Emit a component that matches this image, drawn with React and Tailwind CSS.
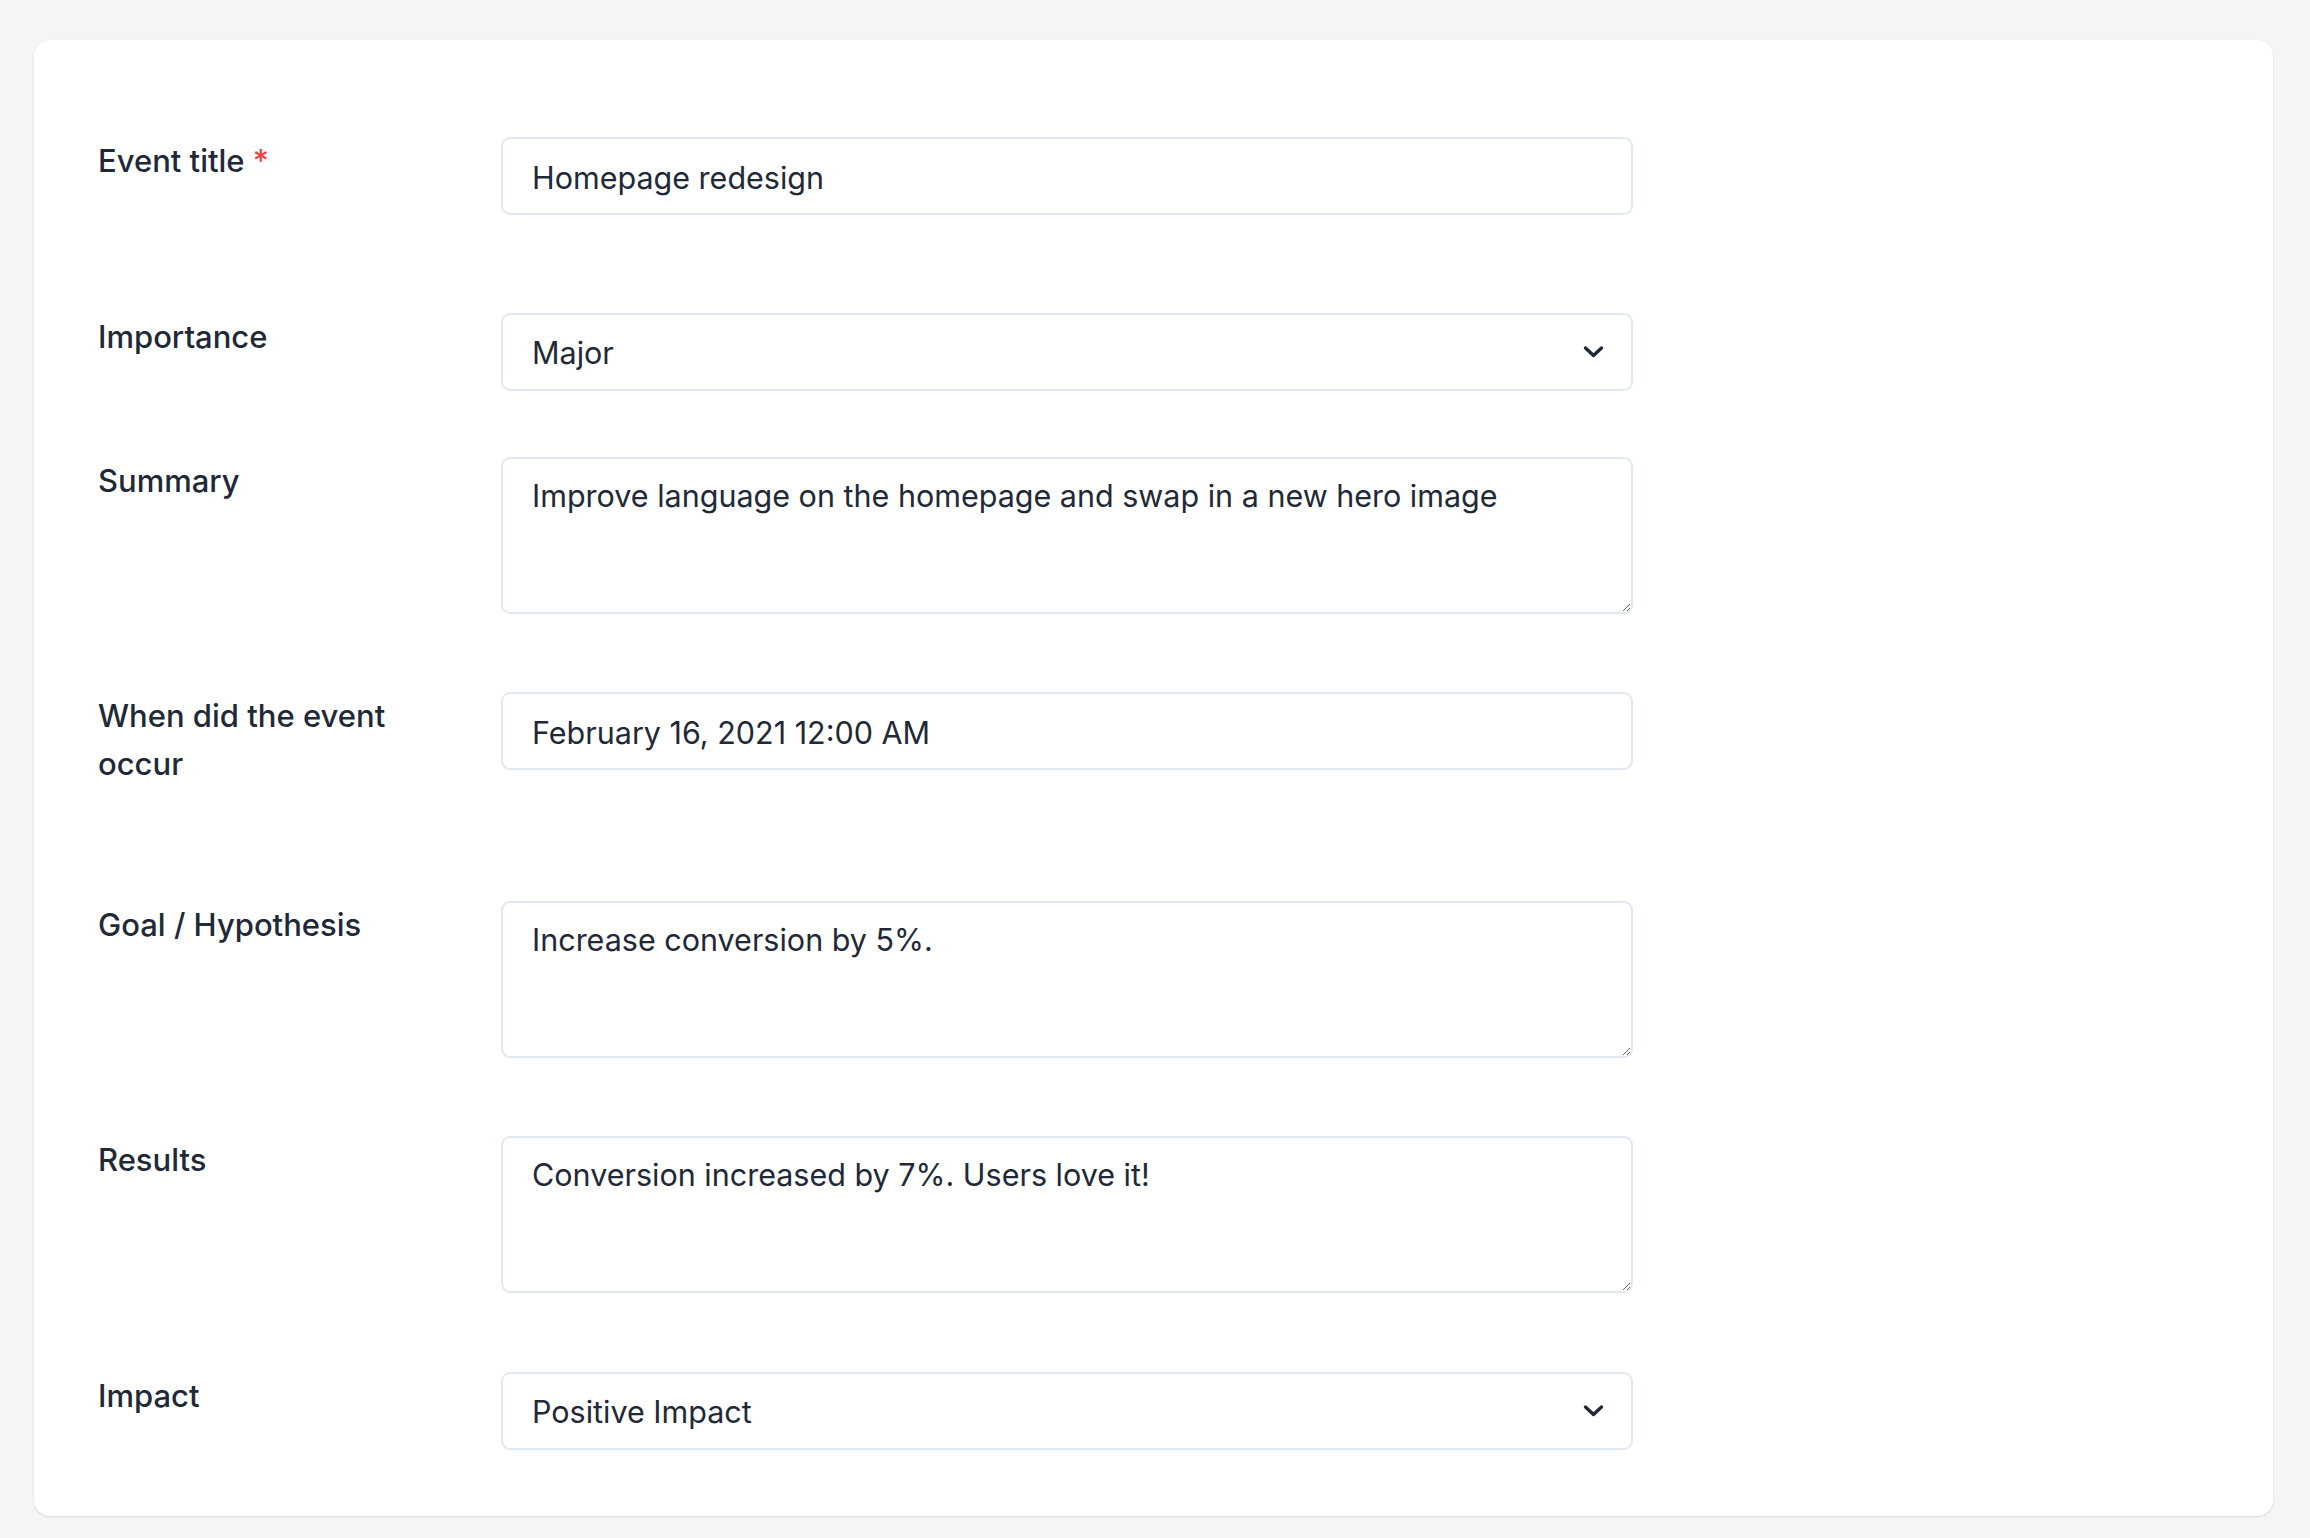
import React from 'react';

const labelCls = "w-[403px] shrink-0 pr-[60px] text-[31px] leading-[48px] font-medium text-[#1f2937]";
const boxCls = "w-[1132px] border-2 border-[#e2e8f0] rounded-[9px] bg-white text-[30.5px] text-[#1f2937] outline-none";

const Chevron = () => (
  <svg
    className="absolute right-[29px] top-1/2 -translate-y-1/2 pointer-events-none"
    width="21"
    height="13"
    viewBox="0 0 21 13"
    fill="none"
    stroke="#1f2937"
    strokeWidth="3.4"
    strokeLinecap="round"
    strokeLinejoin="round"
  >
    <polyline points="2.5,2.5 10.5,10 18.5,2.5" />
  </svg>
);

const TextField = ({ value }) => (
  <input
    type="text"
    readOnly
    value={value}
    className={`${boxCls} h-[78px] pl-[29px] pr-[20px] pt-[2px] leading-[44px]`}
  />
);

const SelectField = ({ value, options }) => (
  <div className="relative w-[1132px]">
    <select
      value={value}
      onChange={() => {}}
      className={`${boxCls} appearance-none h-[78px] pl-[29px] pr-[60px] pt-[2px] leading-[44px]`}
    >
      {options.map(o => (
        <option key={o} value={o}>{o}</option>
      ))}
    </select>
    <Chevron />
  </div>
);

const TextAreaField = ({ value }) => (
  <textarea
    readOnly
    value={value}
    className={`${boxCls} block h-[157px] pl-[29px] pr-[20px] pt-[15px] leading-[44px]`}
  />
);

const Row = ({ label, required, height, children }) => (
  <div className="flex items-start" style={{ height }}>
    <div className={labelCls}>
      {label}
      {required && <span className="text-[#ef4444]"> *</span>}
    </div>
    {children}
  </div>
);

export default function App() {
  return (
    <div
      className="min-h-[1538px] bg-[#f5f5f5] pt-[40px] pl-[34px]"
      style={{ fontFamily: 'Inter, "Noto Sans", sans-serif' }}
    >
      <div className="w-[2239px] bg-white rounded-[16px] shadow-[0_1px_3px_rgba(0,0,0,0.08),0_1px_2px_rgba(0,0,0,0.04)] pt-[97px] pb-[65px] pl-[64px]">
        <Row label="Event title" required height={176}>
          <TextField value="Homepage redesign" />
        </Row>
        <Row label="Importance" height={144}>
          <SelectField value="Major" options={['Minor', 'Major', 'Critical']} />
        </Row>
        <Row label="Summary" height={235}>
          <TextAreaField value="Improve language on the homepage and swap in a new hero image" />
        </Row>
        <Row label="When did the event occur" height={209}>
          <TextField value="February 16, 2021 12:00 AM" />
        </Row>
        <Row label="Goal / Hypothesis" height={235}>
          <TextAreaField value="Increase conversion by 5%." />
        </Row>
        <Row label="Results" height={236}>
          <TextAreaField value="Conversion increased by 7%. Users love it!" />
        </Row>
        <Row label="Impact" height={79}>
          <SelectField value="Positive Impact" options={['Positive Impact', 'Neutral', 'Negative Impact']} />
        </Row>
      </div>
    </div>
  );
}
